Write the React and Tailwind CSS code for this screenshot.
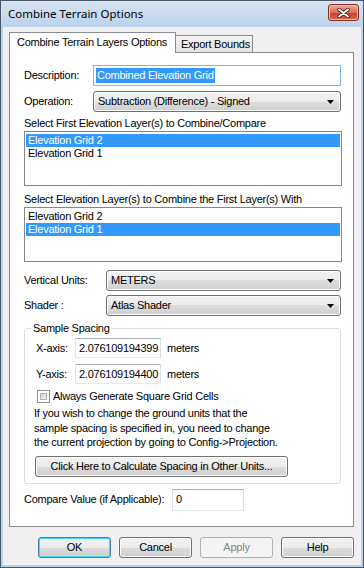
import React from 'react';

const Arrow = () => (
  <svg width="7" height="4" viewBox="0 0 7 4" className="shrink-0">
    <path d="M0 0h7L3.5 4z" fill="#000" />
  </svg>
);

const Combo = ({ value, className }) => (
  <div
    className={`h-[21px] flex items-center justify-between pl-[4px] pr-[6px] border border-[#707070] rounded-[3px] shadow-[inset_0_0_0_1px_#fbfbfb] bg-[linear-gradient(to_bottom,#f2f2f2_0%,#ebebeb_50%,#dddddd_50%,#cfcfcf_100%)] ${className}`}
  >
    <span>{value}</span>
    <Arrow />
  </div>
);

const ListBox = ({ items, selected }) => (
  <div className="w-[318px] h-[55px] border border-[#828790] bg-white p-[1px] pt-[2px]">
    {items.map((item, i) => (
      <div
        key={item}
        className={`h-[13px] leading-[13px] pl-[2px] ${i === selected ? 'bg-[#3399ff] text-white' : ''}`}
      >
        {item}
      </div>
    ))}
  </div>
);

const TextBox = ({ value, className }) => (
  <div
    className={`flex items-center pl-[3px] bg-white border border-[#abadb3] border-l-[#e2e3ea] border-r-[#dbdfe6] border-b-[#e3e9ef] ${className}`}
  >
    {value}
  </div>
);

const Button = ({ children, className = '', disabled, isDefault }) => {
  let look =
    'border-[#707070] bg-[linear-gradient(to_bottom,#f2f2f2_0%,#ebebeb_50%,#dddddd_50%,#cfcfcf_100%)] shadow-[inset_0_0_0_1px_#fbfbfb]';
  if (disabled) look = 'border-[#adb2b5] bg-[#f4f4f4] text-[#838383]';
  if (isDefault)
    look =
      'border-[#3c7fb1] bg-[linear-gradient(to_bottom,#f2f2f2_0%,#ebebeb_50%,#dddddd_50%,#cfcfcf_100%)] shadow-[inset_0_0_0_1px_#48d6fb]';
  return (
    <div
      className={`h-[21px] flex items-center justify-center border rounded-[3px] ${look} ${className}`}
    >
      {children}
    </div>
  );
};

export default function App() {
  return (
    <div className="w-[364px] h-[568px] flex flex-col bg-[#b9d1ea] border border-[#4a5766] font-['Liberation_Sans',Arial,sans-serif] text-[11px] tracking-[-0.25px] text-black">
      {/* Title bar */}
      <div className="h-[26px] flex items-start justify-between bg-[linear-gradient(to_bottom,#d6e4f3,#bcd2ea)]">
        <span className="ml-[7px] mt-[5px] font-['Noto_Sans',sans-serif] text-[11.5px] tracking-normal leading-[16px] text-black">
          Combine Terrain Options
        </span>
        <div className="mt-[3px] mr-[4px] w-[31px] h-[17px] flex items-center justify-center rounded-[3px] border border-[#8c2e23] bg-[linear-gradient(to_bottom,#eba79c_0%,#d8705f_50%,#c7442f_55%,#d46a4f_100%)] shadow-[inset_0_0_0_1px_#f2bcb3]">
          <svg width="13" height="10" viewBox="0 0 13 10">
            <path d="M2 1.5l9 7M11 1.5l-9 7" stroke="#5a1d17" strokeWidth="3.6" strokeLinecap="round" />
            <path d="M2 1.5l9 7M11 1.5l-9 7" stroke="#fff" strokeWidth="2" strokeLinecap="round" />
          </svg>
        </div>
      </div>

      {/* Client area */}
      <div className="mx-[2px] mb-[2px] flex-1 bg-[#f0f0f0] flex flex-col pt-[5px] pl-[6px]">
        {/* Tabs */}
        <div className="h-[20px] flex items-end whitespace-nowrap">
          <div className="relative z-10 -mb-[1px] w-[167px] h-[21px] bg-white border border-b-0 border-[#898c95] flex items-center pl-[7px] pb-[1px]">
            Combine Terrain Layers Options
          </div>
          <div className="w-[77px] h-[17px] border border-b-0 border-l-0 border-[#898c95] bg-[linear-gradient(to_bottom,#f3f3f3,#e3e3e3)] flex items-center pl-[5px]">
            Export Bounds
          </div>
        </div>

        {/* Tab page */}
        <div className="w-[345px] h-[475px] border border-[#898c95] bg-white flex flex-col pl-[14px]">
          <div className="mt-[12px] flex items-center">
            <span className="w-[69px]">Description:</span>
            <div className="w-[248px] h-[21px] flex items-center pl-[2px] bg-white border border-[#7eb4ea]">
              <span className="bg-[#3399ff] text-white h-[15px] leading-[15px] px-[1px]">
                Combined Elevation Grid
              </span>
            </div>
          </div>

          <div className="mt-[5px] flex items-center">
            <span className="w-[69px]">Operation:</span>
            <Combo value="Subtraction (Difference) - Signed" className="w-[248px]" />
          </div>

          <div className="mt-[5px] h-[13px] leading-[13px]">
            Select First Elevation Layer(s) to Combine/Compare
          </div>
          <div className="mt-[1px]">
            <ListBox items={['Elevation Grid 2', 'Elevation Grid 1']} selected={0} />
          </div>

          <div className="mt-[7px] h-[13px] leading-[13px]">
            Select Elevation Layer(s) to Combine the First Layer(s) With
          </div>
          <div className="mt-[1px]">
            <ListBox items={['Elevation Grid 2', 'Elevation Grid 1']} selected={1} />
          </div>

          <div className="mt-[8px] flex items-center">
            <span className="w-[82px]">Vertical Units:</span>
            <Combo value="METERS" className="w-[235px]" />
          </div>
          <div className="mt-[4px] flex items-center">
            <span className="w-[82px]">Shader :</span>
            <Combo value="Atlas Shader" className="w-[235px]" />
          </div>

          {/* Sample Spacing group */}
          <fieldset className="mt-[6px] w-[317px] border border-[#d5dfe5] rounded-[3px] pb-[6px]">
            <legend className="ml-[6px] px-[2px] h-[13px] leading-[13px]">Sample Spacing</legend>

            <div className="mt-[3px] pl-[11px] flex items-center">
              <span className="w-[39px]">X-axis:</span>
              <TextBox value="2.076109194399" className="w-[86px] h-[20px]" />
              <span className="ml-[6px]">meters</span>
            </div>
            <div className="mt-[6px] pl-[11px] flex items-center">
              <span className="w-[39px]">Y-axis:</span>
              <TextBox value="2.076109194400" className="w-[86px] h-[20px]" />
              <span className="ml-[6px]">meters</span>
            </div>

            <div className="mt-[6px] pl-[12px] flex items-center h-[13px]">
              <div className="w-[13px] h-[13px] border border-[#8e8f8f] bg-white p-[2px]">
                <div className="w-full h-full bg-[linear-gradient(135deg,#cbcfd5,#f6f6f6)] border border-[#aeb3b9]" />
              </div>
              <span className="ml-[3px]">Always Generate Square Grid Cells</span>
            </div>

            <p className="mt-[3px] pl-[9px] leading-[14.5px]">
              If you wish to change the ground units that the
              <br />
              sample spacing is specified in, you need to change
              <br />
              the current projection by going to Config-&gt;Projection.
            </p>

            <Button className="mt-[6px] ml-[10px] w-[253px]">
              Click Here to Calculate Spacing in Other Units...
            </Button>
          </fieldset>

          <div className="mt-[5px] flex items-center">
            <span className="w-[148px]">Compare Value (if Applicable):</span>
            <TextBox value="0" className="w-[72px] h-[22px]" />
          </div>
        </div>

        {/* Dialog buttons */}
        <div className="mt-[10px] ml-[29px] flex gap-[8px]">
          <Button isDefault className="w-[73px]">OK</Button>
          <Button className="w-[73px]">Cancel</Button>
          <Button disabled className="w-[73px]">Apply</Button>
          <Button className="w-[73px]">Help</Button>
        </div>
      </div>
    </div>
  );
}
